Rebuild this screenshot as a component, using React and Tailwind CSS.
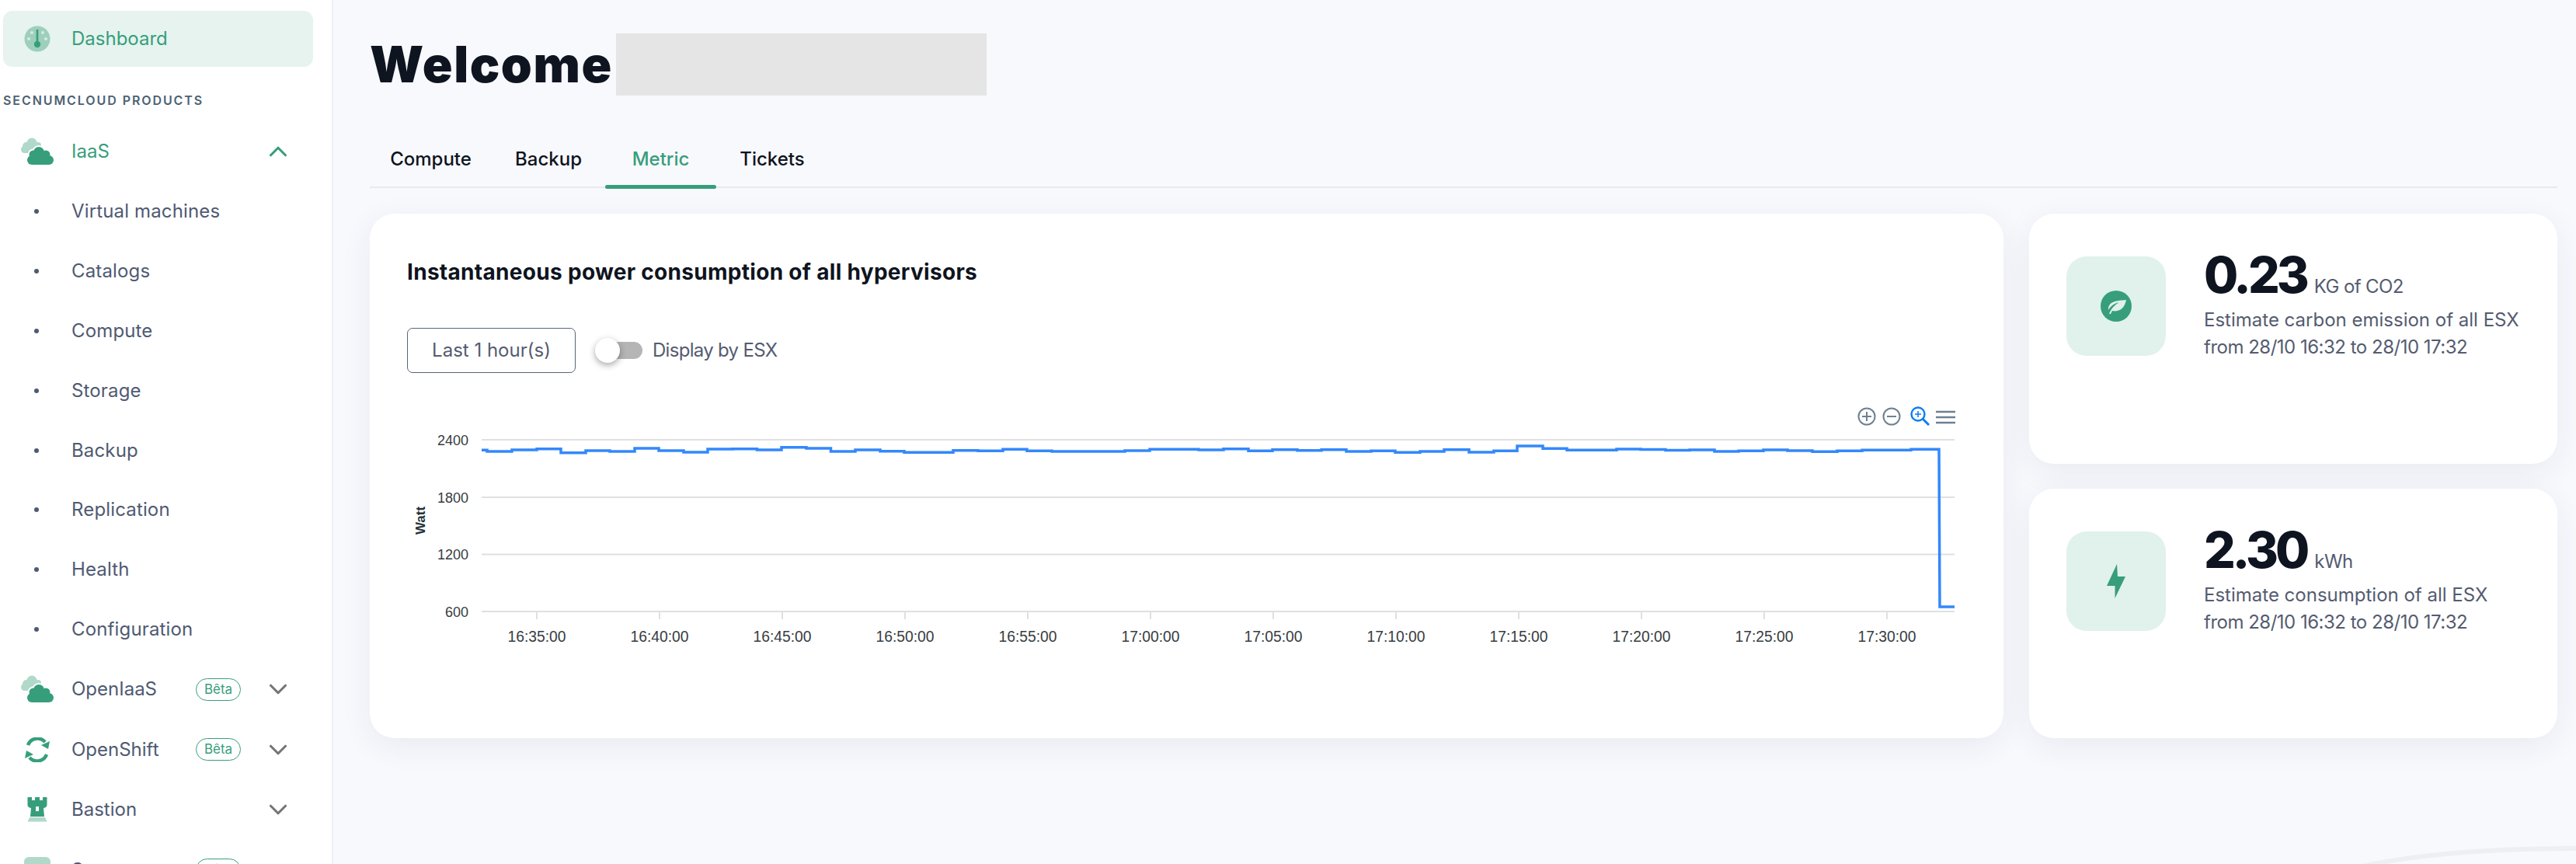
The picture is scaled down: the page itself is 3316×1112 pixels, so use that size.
import { ChevronDown, ChevronUp } from 'lucide-react';

const GREEN = '#379e7c';
const LIGHT = '#b0d9c9';

// chart line: [x where the step ends, y], page pixels
const STEPS = [
  [627, 579.3], [659, 581], [691, 579], [722, 577.7], [754, 582.7], [785, 580], [817, 581], [848, 577],
  [880, 580], [911, 582], [943, 578], [974.5, 577.7], [1006, 579], [1038, 575.7], [1069.5, 577], [1101, 581],
  [1133, 579], [1164, 580.7], [1227, 582.3], [1259, 579.7], [1291, 580.3], [1322, 578.3], [1354, 580.3],
  [1448, 581], [1480, 580], [1543, 578.3], [1575, 579], [1607, 577.7], [1638, 580.3], [1670, 578.7],
  [1701, 579.7], [1733, 578.7], [1765, 581], [1796, 580.3], [1828, 582.3], [1859, 581], [1891, 578.7],
  [1923, 582], [1953, 580.3], [1986, 574], [2017, 577.3], [2081, 579.3], [2112, 578], [2144, 578.5],
  [2175, 579.5], [2207, 579], [2238, 581], [2270, 580.3], [2301, 579], [2333, 580], [2365, 581.3],
  [2397, 580.3], [2460, 579.3], [2496, 578.3],
];
const linePath =
  `M620 ${STEPS[0][1]} ` + STEPS.map(([x, y]) => `V${y} H${x}`).join(' ') + ' L2497 781 H2516';

const TICKS = ['16:35:00', '16:40:00', '16:45:00', '16:50:00', '16:55:00', '17:00:00', '17:05:00', '17:10:00', '17:15:00', '17:20:00', '17:25:00', '17:30:00'];
const YAXIS = [['2400', 566], ['1800', 640], ['1200', 713.5], ['600', 787]];

function Gauge() {
  return (
    <svg width="34" height="34" viewBox="0 0 34 34">
      <circle cx="17" cy="17" r="16.5" fill="#9ecfbc" />
      <circle cx="6" cy="17" r="2" fill="#d5ebe2" />
      <circle cx="28" cy="17" r="2" fill="#d5ebe2" />
      <circle cx="10" cy="9" r="2" fill="#d5ebe2" />
      <circle cx="24" cy="9" r="2" fill="#d5ebe2" />
      <rect x="15.7" y="5" width="2.6" height="18" fill={GREEN} />
      <circle cx="17" cy="24" r="4.2" fill={GREEN} />
    </svg>
  );
}

function Clouds() {
  const front = (
    <>
      <rect x="9" y="23" width="34" height="12" rx="6" />
      <circle cx="17" cy="22" r="5.5" />
      <circle cx="24" cy="19" r="7" />
      <circle cx="33" cy="22" r="5.5" />
    </>
  );
  return (
    <svg width="44" height="36" viewBox="0 0 44 36">
      <g fill={LIGHT}>
        <rect x="1" y="11" width="29" height="9" rx="4.5" />
        <circle cx="8" cy="11" r="5" />
        <circle cx="15" cy="7" r="6.5" />
        <circle cx="23" cy="10" r="4" />
      </g>
      <g fill="#fff" stroke="#fff" strokeWidth="4">{front}</g>
      <g fill={GREEN}>{front}</g>
    </svg>
  );
}

function OpenShift() {
  return (
    <svg width="34" height="32" viewBox="0 0 34 32" fill="none">
      <path d="M5 10 A13 13 0 0 1 27 6" stroke={GREEN} strokeWidth="4.5" />
      <path d="M29 22 A13 13 0 0 1 7 26" stroke={GREEN} strokeWidth="4.5" />
      <path d="M33 5 L31 15 L22 10 Z" fill={GREEN} />
      <path d="M1 27 L3 17 L12 22 Z" fill={GREEN} />
    </svg>
  );
}

function Tower() {
  return (
    <svg width="26" height="32" viewBox="0 0 26 32">
      <path d="M0.5 0 H6 V4 H10 V0 H16 V4 H20 V0 H25.5 V10 Q25.5 13 21 14 L22 25 H4 L5 14 Q0.5 13 0.5 10 Z" fill={GREEN} />
      <rect x="11" y="12" width="4" height="6" fill="#fff" />
      <path d="M3 26 H23 L25.5 31.5 H0.5 Z" fill={LIGHT} />
    </svg>
  );
}

function Leaf() {
  return (
    <svg width="40" height="40" viewBox="-20 -20 40 40">
      <circle r="20" fill={GREEN} />
      <path d="M13 -8 C6 -7 -9 -8 -10 3 L-10 5 C-6 -2 0 -4 4 -5 C-1 -2 -6 2 -9 10 L-7 10 L-5 6 C5 8 11 2 13 -8 Z" fill="#e1f1ec" />
    </svg>
  );
}

function Bolt() {
  return (
    <svg width="24" height="44" viewBox="0 0 24 44">
      <path d="M13 0 L0 28 H10.5 V44 L24 16 H14 Z" fill={GREEN} />
    </svg>
  );
}

function SubItem({ label }) {
  return (
    <div className="flex h-[76.9px] items-center">
      <div className="flex w-[88px] pl-[40px]">
        <span className="h-[6px] w-[6px] rounded-full bg-[#4f5a72]" />
      </div>
      <span className="text-[24px] tracking-[0.15px] text-[#4f5a72]">{label}</span>
    </div>
  );
}

function Product({ icon, label, beta, open }) {
  return (
    <div className="flex h-[77.5px] items-center">
      <div className="flex w-[88px] justify-center">{icon}</div>
      <span className={`w-[160px] text-[24px] ${open ? 'text-[#379e7c]' : 'text-[#4f5a72]'}`}>{label}</span>
      <div className="w-[58px]">
        {beta && (
          <span className="flex h-[29px] w-[58px] items-center justify-center rounded-full border-[1.5px] border-[#379e7c] text-[17px] text-[#379e7c]">
            Bêta
          </span>
        )}
      </div>
      <div className="flex w-[96px] justify-center">
        {open ? (
          <ChevronUp size={38} strokeWidth={2} className="text-[#379e7c]" />
        ) : (
          <ChevronDown size={38} strokeWidth={2} className="text-[#757575]" />
        )}
      </div>
    </div>
  );
}

function Sidebar() {
  return (
    <aside className="h-full w-[429px] shrink-0 overflow-hidden border-r-2 border-[#eeeff2] bg-white pl-1 pt-[14px]">
      <div className="mr-[24px] flex h-[72px] items-center rounded-[12px] bg-[#e6f3ee]">
        <div className="flex w-[88px] justify-center">
          <Gauge />
        </div>
        <span className="text-[24px] text-[#379e7c]">Dashboard</span>
      </div>
      <div className="mt-[31px] flex h-[24px] items-center text-[16px] font-semibold tracking-[0.12em] text-[#4c6272]">
        SECNUMCLOUD PRODUCTS
      </div>
      <div className="mt-[15px]">
        <Product icon={<Clouds />} label="IaaS" open />
        {['Virtual machines', 'Catalogs', 'Compute', 'Storage', 'Backup', 'Replication', 'Health', 'Configuration'].map((l) => (
          <SubItem key={l} label={l} />
        ))}
        <Product icon={<Clouds />} label="OpenIaaS" beta />
        <Product icon={<OpenShift />} label="OpenShift" beta />
        <Product icon={<Tower />} label="Bastion" />
        <Product icon={<div className="h-[34px] w-[34px] rounded-[6px] bg-[#b0d9c9]" />} label="Storage" beta />
      </div>
    </aside>
  );
}

function Tabs() {
  const tabs = [
    ['Compute', 'w-[157px]'],
    ['Backup', 'w-[146px]'],
    ['Metric', 'w-[143px]'],
    ['Tickets', 'w-[144px]'],
  ];
  return (
    <div className="mt-[38px] flex h-[81px] border-b-2 border-[#e8eaee]">
      {tabs.map(([label, w]) => (
        <div key={label} className={`relative flex items-center justify-center pt-[9px] text-[24px] font-medium ${w} ${label === 'Metric' ? 'text-[#379e7c]' : 'text-[#0e1420]'}`}>
          {label}
          {label === 'Metric' && <span className="absolute bottom-[-3px] left-0 h-[5px] w-full rounded-[3px] bg-[#379e7c]" />}
        </div>
      ))}
    </div>
  );
}

function Chart() {
  return (
    <svg width="2000" height="340" viewBox="524 520 2000 340" className="mt-[40px] font-['Liberation_Sans',sans-serif]">
      {YAXIS.map(([label, y]) => (
        <g key={label}>
          <line x1="620" x2="2516" y1={y} y2={y} stroke="#e0e0e0" strokeWidth="2" />
          <text x="603" y={y + 6.5} textAnchor="end" fontSize="18" fill="#373d3f">{label}</text>
        </g>
      ))}
      {TICKS.map((t, i) => (
        <g key={t}>
          <line x1={691 + i * 158} x2={691 + i * 158} y1="787" y2="797" stroke="#e0e0e0" strokeWidth="2" />
          <text x={691 + i * 158} y="826" textAnchor="middle" fontSize="19.3" fill="#373d3f">{t}</text>
        </g>
      ))}
      <text transform="translate(547 670) rotate(-90)" textAnchor="middle" fontSize="17" fontWeight="700" fill="#263238">Watt</text>
      <path d={linePath} fill="none" stroke="#3388fb" strokeWidth="3.5" />
      {/* toolbar */}
      <g fill="none" stroke="#6e8192" strokeWidth="2">
        <circle cx="2403" cy="536" r="10.5" />
        <path d="M2403 530 V542 M2397 536 H2409" />
        <circle cx="2435" cy="536" r="10.5" />
        <path d="M2429 536 H2441" />
        <path d="M2492 530 H2517 M2492 537 H2517 M2492 544 H2517" strokeWidth="2.6" />
      </g>
      <g fill="none" stroke="#0a7cf5" strokeWidth="2.4">
        <circle cx="2469" cy="533" r="8.5" />
        <path d="M2475 539 L2483 547" strokeWidth="3" />
        <path d="M2469 529 V537 M2465 533 H2473" strokeWidth="1.5" />
      </g>
    </svg>
  );
}

function StatCard({ icon, value, unit, label }) {
  return (
    <div className="flex flex-1 rounded-[32px] bg-white pl-[48px] pt-[55px] shadow-[0_10px_40px_rgba(30,40,70,0.07)]">
      <div className="flex h-[128px] w-[128px] shrink-0 items-center justify-center rounded-[26px] bg-[#e1f1ec]">{icon}</div>
      <div className="ml-[49px] -mt-[8px]">
        <div className="flex h-[64px] items-baseline leading-[64px]">
          <span className="text-[64px] font-extrabold tracking-[-4px] text-[#0e1420]">{value}</span>
          <span className="ml-[10px] text-[24px] tracking-[-0.6px] text-[#545c70]">{unit}</span>
        </div>
        <p className="mt-[8px] text-[24px] leading-[35px] text-[#545c70]">
          {label}
          <br />
          <span className="tracking-[-0.5px]">from 28/10 16:32 to 28/10 17:32</span>
        </p>
      </div>
    </div>
  );
}

export default function App() {
  return (
    <div className="relative flex h-[1112px] w-[3316px] overflow-hidden bg-[#f8f9fd] font-['Inter',sans-serif]">
      <Sidebar />
      <main className="flex-1 pl-[47px] pr-[24px] pt-[43px]">
        <div className="flex h-[80px] items-center gap-[7px]">
          <h1 className="w-[310px] whitespace-nowrap text-[64px] font-black leading-none tracking-[1.6px] text-[#0e1420]">Welcome</h1>
          <div className="h-[80px] w-[477px] bg-[#e5e5e5]" />
        </div>
        <Tabs />
        <div className="mt-[33px] flex h-[675px] gap-[33px]">
          <section className="flex-1 rounded-[32px] bg-white pl-[48px] pt-[55px] shadow-[0_10px_40px_rgba(30,40,70,0.07)]">
            <h2 className="text-[28px] font-bold leading-[40px] tracking-[0.3px] text-[#0e1420]">Instantaneous power consumption of all hypervisors</h2>
            <div className="mt-[52px] flex h-[58px] items-center">
              <button className="h-[58px] w-[217px] rounded-[7px] border-[1.5px] border-[#5a6478] text-[24px] text-[#545c70]">Last 1 hour(s)</button>
              <div className="relative ml-[42px] h-[22px] w-[44px] rounded-full bg-[#b5b5b5]">
                <span className="absolute left-[-17px] top-[-5px] h-[32px] w-[32px] rounded-full bg-white shadow-[0_3px_8px_rgba(0,0,0,0.35)]" />
              </div>
              <span className="ml-[13px] text-[24px] tracking-[-0.7px] text-[#545c70]">Display by ESX</span>
            </div>
            <Chart />
          </section>
          <div className="flex w-[680px] flex-col gap-[32px]">
            <StatCard icon={<Leaf />} value="0.23" unit="KG of CO2" label="Estimate carbon emission of all ESX" />
            <StatCard icon={<Bolt />} value="2.30" unit="kWh" label="Estimate consumption of all ESX" />
          </div>
        </div>
      </main>
      {/* background arc, bottom right corner */}
      <svg width="280" height="30" viewBox="3036 1082 280 30" className="absolute bottom-0 right-0">
        <path d="M3040 1115 C3120 1098 3220 1092 3316 1092" fill="none" stroke="#eeeff2" strokeWidth="6" />
      </svg>
    </div>
  );
}
